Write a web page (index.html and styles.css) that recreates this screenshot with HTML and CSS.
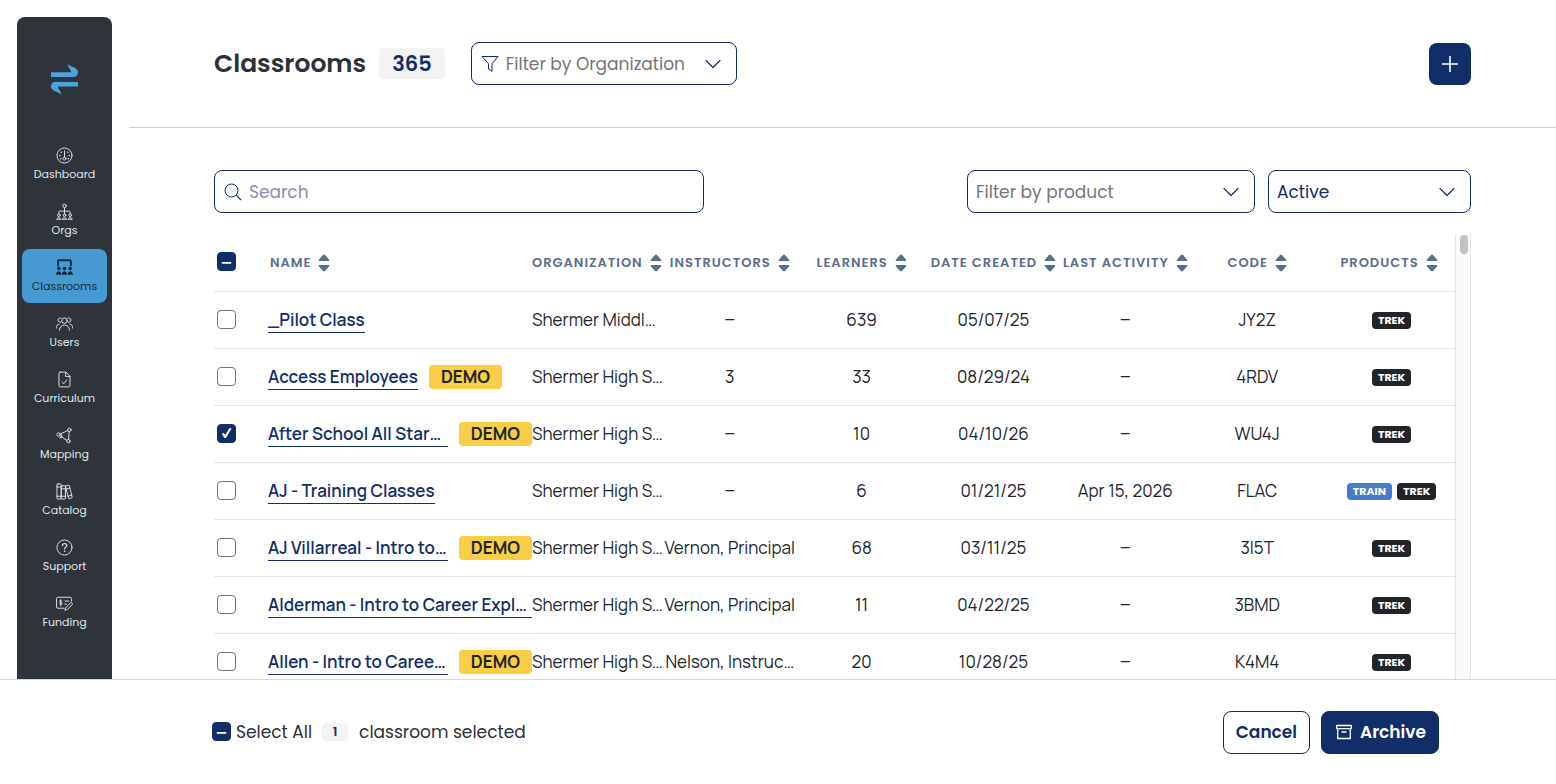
FILE: index.html
```html
<!DOCTYPE html>
<html lang="en">
<head>
    <meta charset="utf-8">
    <meta name="viewport" content="width=device-width, initial-scale=1">
    <title>Classrooms</title>
    <link rel="stylesheet" href="styles.css">
</head>
<body>
    <!-- shared icons -->
    <svg class="sprite" aria-hidden="true">
        <symbol id="chevron" viewBox="0 0 16 16"><path d="M1 4.500l7 7 7-7" fill="none" stroke="currentColor" stroke-width="1.200" stroke-linecap="round" stroke-linejoin="round"/></symbol>
        <symbol id="sort" viewBox="0 0 12 18"><path d="M6 .6c.4 0 .7.2 1 .5l4 4.500c.6.7.3 1.400-.5 1.400h-9C.7 7 .4 6.300 1 5.600l4-4.500c.3-.3.6-.5 1-.5zM6 17.400c.4 0 .7-.2 1-.5l4-4.500c.6-.7.3-1.400-.5-1.400h-9c-.8 0-1.100.7-.5 1.400l4 4.500c.3.3.6.5 1 .5z" fill="currentColor"/></symbol>
        <symbol id="arrow" viewBox="0 0 27 13"><path d="M0 8.300h18.800c1.400 0 1.500-.9.900-1.900l-1.900-2.900C17 2.300 16.700 1.100 16.700 0c1.800 2.200 4.800 2.600 7.300 4 2 1.100 3 2.500 3 4.500 0 2.600-2 4.500-4.500 4.500H0z"/></symbol>
    </svg>

    <div class="shell">
        <aside class="sidebar">
            <svg class="logo" viewBox="0 0 27 31" fill="#48a5de"><use href="#arrow" width="27" height="13"/><use href="#arrow" width="27" height="13" transform="rotate(180 13.500 15.400)"/></svg>
            <nav class="nav">
                <a class="nav-item" href="#">
                    <svg viewBox="0 0 18 18"><circle cx="9" cy="9" r="8"/><circle cx="9" cy="12.200" r="1.600"/><path d="M9 10.600V4"/><path d="M5.500 5.500h.1M12.500 5.500h.1M4 9h.1M14 9h.1M5 12.500h.1M13 12.500h.1" stroke-width="1.500"/></svg>
                    Dashboard
                </a>
                <a class="nav-item" href="#">
                    <svg viewBox="0 0 18 18"><circle cx="9" cy="3" r="1.800"/><path d="M9 4.800v7M3 11.500V9.800c0-.8.4-1.200 1.200-1.200h9.600c.8 0 1.200.4 1.200 1.200v1.700"/><circle cx="3" cy="13" r="1.400"/><circle cx="9" cy="13" r="1.400"/><circle cx="15" cy="13" r="1.400"/><path d="M.8 16.900c.2-1.800 4.200-1.800 4.400 0zM6.800 16.900c.2-1.800 4.200-1.800 4.400 0zM12.800 16.900c.2-1.800 4.200-1.800 4.400 0z"/></svg>
                    Orgs
                </a>
                <a class="nav-item active" href="#">
                    <svg viewBox="0 0 18 18"><path d="M2.200 7V2.500c0-.7.4-1.200 1.200-1.200h11.200c.8 0 1.200.5 1.200 1.200V7" stroke-width="2"/><g fill="currentColor" stroke="none"><circle cx="3" cy="10" r="1.900"/><circle cx="9" cy="10" r="1.900"/><circle cx="15" cy="10" r="1.900"/><path d="M0 16.800c0-5 5.700-5 5.700 0zM6.200 16.800c0-5 5.600-5 5.600 0zM12.300 16.800c0-5 5.700-5 5.700 0z"/></g></svg>
                    Classrooms
                </a>
                <a class="nav-item" href="#">
                    <svg viewBox="0 0 18 18"><circle cx="9" cy="6" r="2.900"/><path d="M3.700 16c0-7.200 10.600-7.200 10.600 0"/><path d="M5.200 7.600A2.300 2.300 0 1 1 5.400 3.300M12.800 7.600a2.300 2.300 0 1 0-.2-4.300M.2 14c0-2.700 1-4 3-4.300M17.800 14c0-2.700-1-4-3-4.300"/></svg>
                    Users
                </a>
                <a class="nav-item" href="#">
                    <svg viewBox="0 0 18 18"><path d="M4.500 1.200h6l4.300 4.300v9.800c0 .9-.5 1.500-1.400 1.500H4.500c-.9 0-1.400-.6-1.400-1.500V2.700c0-.9.5-1.500 1.400-1.500zM10.300 1.300v4.500h4.400M6.500 11.800l1.700 1.700 3.200-4"/></svg>
                    Curriculum
                </a>
                <a class="nav-item" href="#">
                    <svg viewBox="0 0 18 18"><circle cx="2.800" cy="8" r="1.800"/><circle cx="14.200" cy="3" r="1.800"/><circle cx="13.200" cy="15" r="1.800"/><path d="M4.500 7.400l8-3.600M4.200 9.200l2.200 1.600 5.200 3.400M14 4.800l-.7 8.400M4 11.500l2.400-.7-.5-2.400"/></svg>
                    Mapping
                </a>
                <a class="nav-item" href="#">
                    <svg viewBox="0 0 18 18"><rect x="1" y="1" width="4.500" height="16" rx="1"/><rect x="5.500" y="3" width="4.500" height="14" rx="1"/><path d="M10.300 3.200l2.700-.9c.5-.2.9 0 1.100.6l3 12c.1.500-.1.900-.6 1l-2.300.7c-.5.100-.9-.1-1-.6l-3-11.800c-.1-.5-.1-.8.100-1zM1 4.200h4.500M5.500 6.200H10M5.500 14H10M10.800 6.500l3.900-1.200M12.800 14l3.900-1.200M1 14h4.500"/></svg>
                    Catalog
                </a>
                <a class="nav-item" href="#">
                    <svg viewBox="0 0 18 18"><circle cx="9" cy="9" r="8"/><path d="M6.800 7c0-3 4.600-3 4.600-.2 0 1.900-2.300 1.800-2.300 3.700" stroke-width="1.200"/><path d="M9.100 13h.1" stroke-width="1.600"/></svg>
                    Support
                </a>
                <a class="nav-item" href="#">
                    <svg viewBox="0 0 18 18"><path d="M8.500 14H2c-.9 0-1.500-.5-1.500-1.400V3.800c0-.9.6-1.400 1.500-1.400h13c.9 0 1.500.5 1.500 1.400v2.700M6.300 6.400c-.6-1-2.500-.8-2.500.4 0 1.500 2.600.7 2.600 2.300 0 1.200-2.100 1.300-2.700.2M5 5v6.300M9.500 6.400h4M9.500 9.600h1.500"/><path d="M10.300 13.500l5-5.200c1-1 2.900.8 1.900 1.900l-5 5.100-2.500.7z"/></svg>
                    Funding
                </a>
            </nav>
        </aside>

        <main class="main">
            <header class="page-header">
                <h1 class="title">Classrooms</h1>
                <span class="total">365</span>
                <div class="field org-filter">
                    <svg class="icon funnel" viewBox="0 0 18 18"><path d="M1 1.500h16l-6 7.300v7.700l-3.500-2.500V8.800z" fill="none" stroke="currentColor" stroke-linejoin="round"/></svg>
                    <select aria-label="Filter by Organization"><option>Filter by Organization</option></select>
                    <svg class="icon"><use href="#chevron"/></svg>
                </div>
                <button class="add-btn" type="button" aria-label="Add classroom">
                    <svg class="icon" viewBox="0 0 16 16"><path d="M8 0v16M0 8h16" stroke="currentColor" stroke-width="1.600"/></svg>
                </button>
            </header>

            <div class="content">
                <div class="toolbar">
                    <div class="field search">
                        <svg class="icon glass" viewBox="0 0 18 18"><path d="M17 17l-4.800-4.800" stroke="currentColor" stroke-width="1.200"/><circle cx="7.500" cy="7.500" r="6.500" fill="none" stroke="currentColor"/></svg>
                        <input type="text" placeholder="Search" aria-label="Search">
                    </div>
                    <div class="field product-filter">
                        <select aria-label="Filter by product"><option>Filter by product</option></select>
                        <svg class="icon"><use href="#chevron"/></svg>
                    </div>
                    <div class="field status-filter">
                        <select aria-label="Status"><option>Active</option></select>
                        <svg class="icon"><use href="#chevron"/></svg>
                    </div>
                </div>

                <div class="table-wrap">
                    <div class="table-scroll">
                        <table class="table">
                            <colgroup><col class="col-check"><col class="col-name"><col span="7"></colgroup>
                            <thead>
                                <tr>
                                    <th class="left"><input class="check partial" type="checkbox" aria-label="Select all"></th>
                                    <th class="left name-head"><span class="sort">Name <svg><use href="#sort"/></svg></span></th>
                                    <th class="left"><span class="sort">Organization <svg><use href="#sort"/></svg></span></th>
                                    <th><span class="sort">Instructors <svg><use href="#sort"/></svg></span></th>
                                    <th><span class="sort">Learners <svg><use href="#sort"/></svg></span></th>
                                    <th><span class="sort">Date Created <svg><use href="#sort"/></svg></span></th>
                                    <th><span class="sort">Last Activity <svg><use href="#sort"/></svg></span></th>
                                    <th><span class="sort">Code <svg><use href="#sort"/></svg></span></th>
                                    <th><span class="sort">Products <svg><use href="#sort"/></svg></span></th>
                                </tr>
                            </thead>
                            <tbody>
                                <tr>
                                    <td class="left"><input class="check" type="checkbox" aria-label="Select _Pilot Class"></td>
                                    <td class="left"><div class="name"><a href="#">_Pilot Class</a></div></td>
                                    <td class="left">Shermer Middl…</td>
                                    <td class="empty">–</td>
                                    <td>639</td>
                                    <td>05/07/25</td>
                                    <td class="empty">–</td>
                                    <td>JY2Z</td>
                                    <td class="products"><span class="tag">TREK</span></td>
                                </tr>
                                <tr>
                                    <td class="left"><input class="check" type="checkbox" aria-label="Select Access Employees"></td>
                                    <td class="left"><div class="name"><a href="#">Access Employees</a><span class="demo">DEMO</span></div></td>
                                    <td class="left">Shermer High S…</td>
                                    <td>3</td>
                                    <td>33</td>
                                    <td>08/29/24</td>
                                    <td class="empty">–</td>
                                    <td>4RDV</td>
                                    <td class="products"><span class="tag">TREK</span></td>
                                </tr>
                                <tr>
                                    <td class="left"><input class="check" type="checkbox" aria-label="Select After School All Star" checked></td>
                                    <td class="left"><div class="name"><a class="cut" href="#">After School All Star…</a><span class="demo">DEMO</span></div></td>
                                    <td class="left">Shermer High S…</td>
                                    <td class="empty">–</td>
                                    <td>10</td>
                                    <td>04/10/26</td>
                                    <td class="empty">–</td>
                                    <td>WU4J</td>
                                    <td class="products"><span class="tag">TREK</span></td>
                                </tr>
                                <tr>
                                    <td class="left"><input class="check" type="checkbox" aria-label="Select AJ - Training Classes"></td>
                                    <td class="left"><div class="name"><a href="#">AJ - Training Classes</a></div></td>
                                    <td class="left">Shermer High S…</td>
                                    <td class="empty">–</td>
                                    <td>6</td>
                                    <td>01/21/25</td>
                                    <td>Apr 15, 2026</td>
                                    <td>FLAC</td>
                                    <td class="products"><span class="tag train">TRAIN</span><span class="tag">TREK</span></td>
                                </tr>
                                <tr>
                                    <td class="left"><input class="check" type="checkbox" aria-label="Select AJ Villarreal"></td>
                                    <td class="left"><div class="name"><a class="cut" href="#">AJ Villarreal - Intro to…</a><span class="demo">DEMO</span></div></td>
                                    <td class="left">Shermer High S…</td>
                                    <td>Vernon, Principal</td>
                                    <td>68</td>
                                    <td>03/11/25</td>
                                    <td class="empty">–</td>
                                    <td>3I5T</td>
                                    <td class="products"><span class="tag">TREK</span></td>
                                </tr>
                                <tr>
                                    <td class="left"><input class="check" type="checkbox" aria-label="Select Alderman"></td>
                                    <td class="left"><div class="name"><a class="cut" href="#">Alderman - Intro to Career Expl…</a></div></td>
                                    <td class="left">Shermer High S…</td>
                                    <td>Vernon, Principal</td>
                                    <td>11</td>
                                    <td>04/22/25</td>
                                    <td class="empty">–</td>
                                    <td>3BMD</td>
                                    <td class="products"><span class="tag">TREK</span></td>
                                </tr>
                                <tr>
                                    <td class="left"><input class="check" type="checkbox" aria-label="Select Allen"></td>
                                    <td class="left"><div class="name"><a class="cut" href="#">Allen - Intro to Caree…</a><span class="demo">DEMO</span></div></td>
                                    <td class="left">Shermer High S…</td>
                                    <td>Nelson, Instruc…</td>
                                    <td>20</td>
                                    <td>10/28/25</td>
                                    <td class="empty">–</td>
                                    <td>K4M4</td>
                                    <td class="products"><span class="tag">TREK</span></td>
                                </tr>
                            </tbody>
                        </table>
                    </div>
                    <div class="scrollbar"><div class="thumb"></div></div>
                </div>
            </div>
        </main>
    </div>

    <footer class="selection-bar">
        <input class="check partial" type="checkbox" id="select-all">
        <label for="select-all">Select All</label>
        <span class="count">1</span>
        <span>classroom selected</span>
        <div class="actions">
            <button class="btn" type="button">Cancel</button>
            <button class="btn primary" type="button">
                <svg class="icon" viewBox="0 0 16 16" fill="none" stroke="currentColor" stroke-width="1.300" stroke-linejoin="round"><path d="M.7 1.500h14.600v3.200H.7zM1.700 4.700v9.800h12.600V4.700M5.500 8h5"/></svg>
                Archive
            </button>
        </div>
    </footer>
</body>
</html>
```

FILE: styles.css
```css
* {
    box-sizing: border-box;
}

body {
    margin: 0;
    height: 100vh;
    display: flex;
    flex-direction: column;
    overflow: hidden;
    background: #fff;
    color: #2d3138;
    font-family: Poppins, Inter, "Open Sans", sans-serif;
    font-size: 17px;
}

input, select, button {
    font: inherit;
    color: inherit;
}

.sprite {
    display: none;
}

.icon {
    flex: none;
    width: 16px;
    height: 16px;
}

.shell {
    flex: 1;
    min-height: 0;
    display: flex;
    overflow: hidden;
}

/* Sidebar */
.sidebar {
    flex: none;
    width: 95px;
    margin: 17px 17px 0;
    padding: 47px 5px 0;
    border-radius: 8px 8px 0 0;
    background: #2f343b;
}

.logo {
    display: block;
    width: 27px;
    height: 31px;
    margin: 0 auto 42px;
}

.nav {
    display: flex;
    flex-direction: column;
    gap: 2px;
}

.nav-item {
    display: flex;
    flex-direction: column;
    align-items: center;
    gap: 3px;
    height: 54px;
    padding-top: 10px;
    border-radius: 8px;
    color: #dfe8ef;
    font-size: 11px;
    font-weight: 400;
    line-height: 14px;
    text-decoration: none;
}

.nav-item svg {
    width: 17px;
    height: 17px;
    fill: none;
    stroke: currentColor;
    stroke-linecap: round;
    stroke-linejoin: round;
}

.nav-item.active {
    background: #4799d1;
    color: #14293d;
}

/* Header */
.main {
    flex: 1;
    min-width: 0;
    display: flex;
    flex-direction: column;
}

.page-header {
    flex: none;
    display: flex;
    align-items: center;
    height: 128px;
    padding: 0 85px;
    border-bottom: 1px solid #ccc;
}

.title {
    margin: 0 13px 0 0;
    font-size: 25px;
    font-weight: 600;
    line-height: 32px;
}

.total {
    padding: 0 13px;
    margin-right: 26px;
    border-radius: 4px;
    background: #f3f3f4;
    color: #122e68;
    font-size: 21px;
    font-weight: 600;
    line-height: 31px;
}

.field {
    display: flex;
    align-items: center;
    height: 43px;
    padding: 0 15px 0 8px;
    border: 1px solid #122e68;
    border-radius: 8px;
    color: #122e68;
}

.field select,
.field input {
    flex: 1;
    min-width: 0;
    height: 100%;
    padding: 0;
    border: 0;
    outline: 0;
    background: none;
    appearance: none;
}

.field input::placeholder {
    color: #8490b4;
    opacity: 1;
}

.org-filter {
    width: 266px;
    padding-left: 9px;
}

.org-filter select,
.product-filter select {
    color: #757575;
}

.funnel,
.glass {
    width: 18px;
    height: 18px;
    margin-right: 7px;
}

.add-btn {
    display: flex;
    align-items: center;
    justify-content: center;
    width: 42px;
    height: 42px;
    margin-left: auto;
    border: 0;
    border-radius: 8px;
    background: #122e68;
    color: #fff;
}

/* Toolbar */
.content {
    flex: 1;
    min-height: 0;
    display: flex;
    flex-direction: column;
    padding: 42px 85px 0;
}

.toolbar {
    display: flex;
    gap: 13px;
    margin-bottom: 21px;
}

.search {
    width: 39%;
    margin-right: auto;
    padding-left: 9px;
}

.product-filter {
    width: 288px;
}

.status-filter {
    width: 203px;
}

/* Table */
.table-wrap {
    flex: 1;
    min-height: 0;
    display: flex;
    overflow: hidden;
}

.table-scroll {
    flex: 1;
    min-width: 0;
    overflow: hidden;
}

.scrollbar {
    flex: none;
    width: 16px;
    border: solid #e4e4e4;
    border-width: 0 1px;
    background: #fafafa;
}

.thumb {
    width: 8px;
    height: 19px;
    margin: 1px 2px 0 auto;
    border-radius: 4px;
    background: #c1c1c1;
}

.table {
    width: 100%;
    table-layout: fixed;
    border-collapse: separate;
    border-spacing: 0;
    color: #212529;
    font-family: Manrope, Inter, "Open Sans", sans-serif;
}

.col-check {
    width: 54px;
}

.col-name {
    width: 264px;
}

.table th,
.table td {
    height: 57px;
    padding: 0;
    border-bottom: 1px solid #e3e5e8;
    font-size: 17px;
    line-height: 24px;
    text-align: center;
    white-space: nowrap;
}

.table th {
    height: 58px;
    color: #5a6e8c;
    font-family: Poppins, Inter, "Open Sans", sans-serif;
    font-size: 13px;
    font-weight: 600;
    letter-spacing: 1px;
    text-transform: uppercase;
}

.table .left {
    text-align: left;
}

.table .name-head {
    padding-left: 2px;
}

.table .empty {
    font-family: Poppins, Inter, "Open Sans", sans-serif;
}

.sort {
    display: inline-flex;
    align-items: center;
    gap: 7px;
}

.sort svg {
    width: 12px;
    height: 18px;
}

.name {
    display: flex;
    align-items: center;
    gap: 11px;
}

.name a {
    border-bottom: 1px solid #122e68;
    color: #122e68;
    font-weight: 600;
    text-decoration: none;
}

.name .cut {
    flex: 1;
    min-width: 0;
}

.demo {
    padding: 0 12px;
    border-radius: 4px;
    background: #f7ce46;
    font-weight: 700;
}

.table .products {
    padding: 0 0 2px 5px;
}

.tag {
    display: inline-block;
    padding: 0 6px;
    border-radius: 4px;
    background: #212529;
    color: #fff;
    font-family: Poppins, Inter, "Open Sans", sans-serif;
    font-size: 11px;
    font-weight: 700;
    line-height: 17px;
    vertical-align: middle;
}

.tag + .tag {
    margin-left: 5px;
}

.tag.train {
    background: #4a7bc8;
}

.check {
    display: block;
    flex: none;
    width: 19px;
    height: 19px;
    margin: 0 0 2px 3px;
    appearance: none;
    border: 1px solid #757575;
    border-radius: 4px;
    background: #fff center / 17px 17px no-repeat;
}

.check:checked,
.check.partial {
    border-color: #122e68;
    background-color: #122e68;
}

.check:checked {
    background-image: url("data:image/svg+xml,%3Csvg xmlns='http://www.w3.org/2000/svg' viewBox='0 0 18 18'%3E%3Cpath d='M4 9.500l2-1.200 1.600 2.200L12 3.500h2.400L8.500 13.800H6.800z' fill='white'/%3E%3C/svg%3E");
}

.check.partial {
    background-image: url("data:image/svg+xml,%3Csvg xmlns='http://www.w3.org/2000/svg' viewBox='0 0 18 18'%3E%3Cpath d='M4 10.500h10' stroke='white' stroke-width='2'/%3E%3C/svg%3E");
}

/* Selection bar */
.selection-bar {
    flex: none;
    display: flex;
    align-items: center;
    height: 105px;
    padding: 0 117px 0 212px;
    border-top: 1px solid #d5d7da;
    background: #fff;
}

.selection-bar .check {
    margin: 0 5px 2px 0;
}

.count {
    width: 26px;
    margin: 0 11px 0 10px;
    border-radius: 4px;
    background: #f3f3f4;
    color: #122e68;
    font-size: 13px;
    font-weight: 600;
    line-height: 18px;
    text-align: center;
}

.actions {
    display: flex;
    gap: 11px;
    margin-left: auto;
}

.btn {
    display: flex;
    align-items: center;
    gap: 8px;
    height: 43px;
    padding: 0 12px;
    border: 1px solid #122e68;
    border-radius: 8px;
    background: #fff;
    color: #122e68;
    font-weight: 600;
}

.btn.primary {
    padding: 0 12px 0 14px;
    background: #122e68;
    color: #fff;
}
```
